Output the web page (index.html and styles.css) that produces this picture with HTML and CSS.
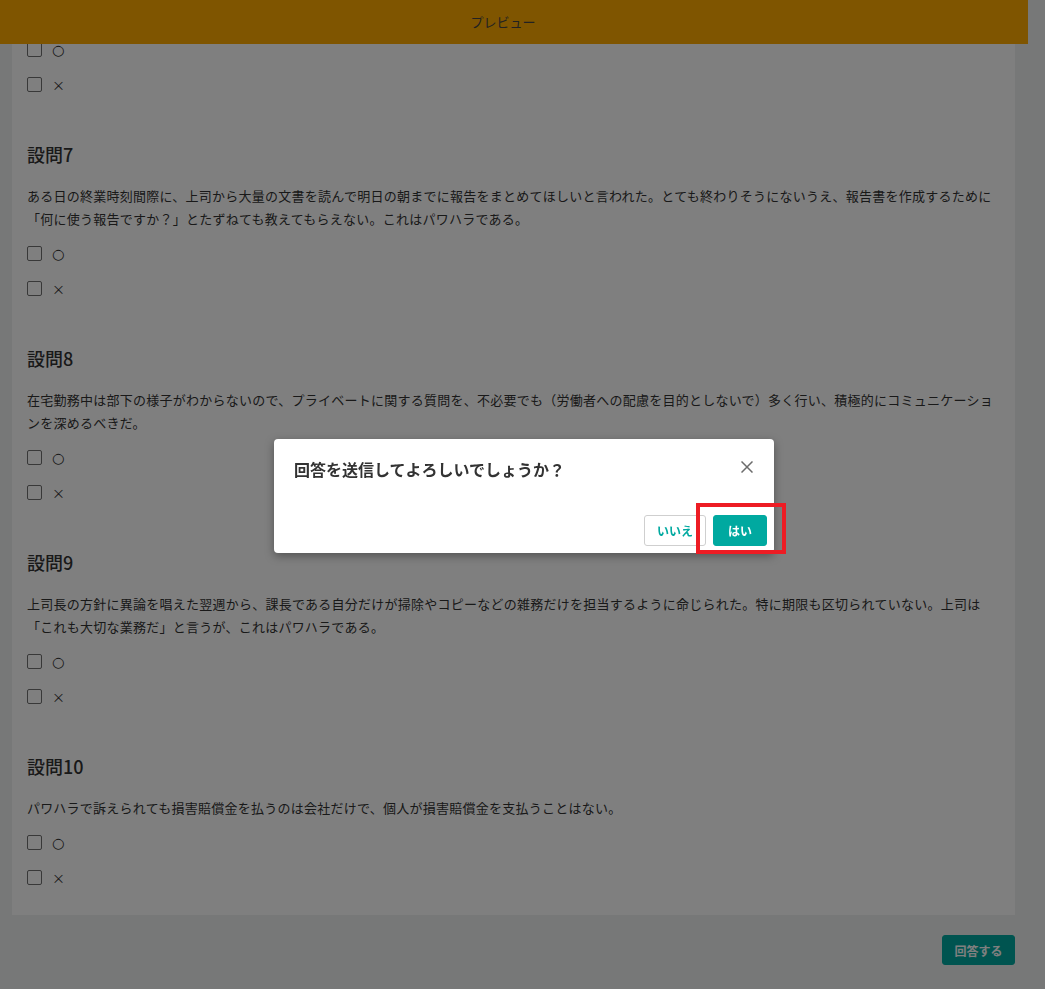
FILE: index.html
```html
<!DOCTYPE html>
<html lang="ja">
<head>
    <meta charset="UTF-8">
    <meta name="viewport" content="width=device-width, initial-scale=1.0">
    <title>プレビュー</title>
    <link rel="stylesheet" href="styles.css">
</head>
<body>
    <header class="preview-bar">プレビュー</header>

    <main class="page">
        <div class="card">
            <section class="question">
                <div class="options">
                    <label class="option"><span class="checkbox"></span><span class="option-label mark-yes">○</span></label>
                    <label class="option"><span class="checkbox"></span><span class="option-label">×</span></label>
                </div>
            </section>

            <section class="question">
                <h3 class="question-title">設問7</h3>
                <p class="question-text">ある日の終業時刻間際に、上司から大量の文書を読んで明日の朝までに報告をまとめてほしいと言われた。とても終わりそうにないうえ、報告書を作成するために「何に使う報告ですか？」とたずねても教えてもらえない。これはパワハラである。</p>
                <div class="options">
                    <label class="option"><span class="checkbox"></span><span class="option-label mark-yes">○</span></label>
                    <label class="option"><span class="checkbox"></span><span class="option-label">×</span></label>
                </div>
            </section>

            <section class="question">
                <h3 class="question-title">設問8</h3>
                <p class="question-text">在宅勤務中は部下の様子がわからないので、プライベートに関する質問を、不必要でも（労働者への配慮を目的としないで）多く行い、積極的にコミュニケーションを深めるべきだ。</p>
                <div class="options">
                    <label class="option"><span class="checkbox"></span><span class="option-label mark-yes">○</span></label>
                    <label class="option"><span class="checkbox"></span><span class="option-label">×</span></label>
                </div>
            </section>

            <section class="question">
                <h3 class="question-title">設問9</h3>
                <p class="question-text">上司長の方針に異論を唱えた翌週から、課長である自分だけが掃除やコピーなどの雑務だけを担当するように命じられた。特に期限も区切られていない。上司は「これも大切な業務だ」と言うが、これはパワハラである。</p>
                <div class="options">
                    <label class="option"><span class="checkbox"></span><span class="option-label mark-yes">○</span></label>
                    <label class="option"><span class="checkbox"></span><span class="option-label">×</span></label>
                </div>
            </section>

            <section class="question">
                <h3 class="question-title">設問10</h3>
                <p class="question-text">パワハラで訴えられても損害賠償金を払うのは会社だけで、個人が損害賠償金を支払うことはない。</p>
                <div class="options">
                    <label class="option"><span class="checkbox"></span><span class="option-label mark-yes">○</span></label>
                    <label class="option"><span class="checkbox"></span><span class="option-label">×</span></label>
                </div>
            </section>
        </div>

        <div class="actions">
            <button class="btn btn-primary btn-submit">回答する</button>
        </div>
    </main>

    <div class="overlay">
        <div class="modal">
            <div class="modal-header">
                <h2 class="modal-title">回答を送信してよろしいでしょうか？</h2>
                <button class="modal-close" aria-label="閉じる">
                    <svg width="12" height="12" viewBox="0 0 12 12">
                        <path d="M0.5 0.5 L11.5 11.5 M11.5 0.5 L0.5 11.5" stroke="#6c6c6c" stroke-width="1.5" fill="none"/>
                    </svg>
                </button>
            </div>
            <div class="modal-body"></div>
            <div class="modal-footer">
                <button class="btn btn-outline">いいえ</button>
                <button class="btn btn-primary">はい</button>
                <span class="highlight"></span>
            </div>
        </div>
    </div>
</body>
</html>
```

FILE: styles.css
```css
body {
    margin: 0;
    font-family: "Noto Sans CJK JP", "Noto Sans", sans-serif;
    color: #333;
    background-color: #eff0f0;
}
.preview-bar {
    position: fixed;
    top: 0;
    left: 0;
    width: 1006px;
    padding-right: 22px;
    height: 44px;
    line-height: 44px;
    background-color: #ffaa00;
    color: #444;
    font-size: 13px;
    text-align: center;
    z-index: 10;
}
.page {
    width: 1003px;
    padding: 0 13px 0 12px;
}
.card {
    background: white;
    padding: 39px 15px 27px;
}
.question {
    margin-bottom: 46px;
}
.question:last-child {
    margin-bottom: 0;
}
.question-title {
    margin: 0 0 16px;
    font-size: 18px;
    line-height: 27px;
    font-weight: 500;
}
.question-text {
    margin: 0 0 13px;
    font-size: 13px;
    line-height: 23px;
    letter-spacing: 0.25px;
}
.options {
    display: flex;
    flex-direction: column;
    gap: 14px;
}
.option {
    display: flex;
    align-items: center;
    height: 21px;
    font-size: 13px;
}
.checkbox {
    width: 15px;
    height: 15px;
    box-sizing: border-box;
    border: 1.5px solid #717171;
    border-radius: 2px;
    background: white;
    margin-right: 10px;
}
.mark-yes {
    font-family: "DejaVu Sans", sans-serif;
    font-size: 14.5px;
}
.actions {
    display: flex;
    justify-content: flex-end;
    margin-top: 20px;
}
.btn {
    height: 31px;
    padding: 0 12px;
    border-radius: 3px;
    font-family: inherit;
    font-size: 12px;
    font-weight: bold;
    cursor: pointer;
}
.btn-primary {
    background-color: #00a9a0;
    border: 1px solid #00a9a0;
    color: white;
    padding: 0 14px;
}
.btn-outline {
    background: white;
    border: 1px solid #cfcfcf;
    color: #00a9a0;
}
.btn-submit {
    height: 30px;
    width: 73px;
    padding: 0;
}
.overlay {
    position: fixed;
    inset: 0;
    background: rgba(0, 0, 0, 0.5);
    display: flex;
    align-items: center;
    justify-content: center;
    padding: 3px 0 0 3px;
    z-index: 20;
}
.modal {
    position: relative;
    width: 500px;
    background: white;
    border-radius: 4px;
    box-shadow: 0 3px 10px rgba(0, 0, 0, 0.35);
}
.modal-header {
    display: flex;
    justify-content: space-between;
    align-items: flex-start;
    padding: 20px 21px 0 20px;
}
.modal-title {
    margin: 0;
    font-size: 16px;
    line-height: 20px;
    font-weight: bold;
    color: #333;
}
.modal-close {
    border: none;
    background: none;
    padding: 0;
    margin-top: 2px;
    width: 12px;
    height: 12px;
    display: flex;
    cursor: pointer;
}
.modal-body {
    height: 29px;
}
.modal-footer {
    display: flex;
    justify-content: flex-end;
    gap: 7px;
    padding: 7px;
}
.highlight {
    position: absolute;
    left: 422px;
    top: 64px;
    width: 90px;
    height: 51px;
    box-sizing: border-box;
    border: 4px solid #ed1c24;
}
```
